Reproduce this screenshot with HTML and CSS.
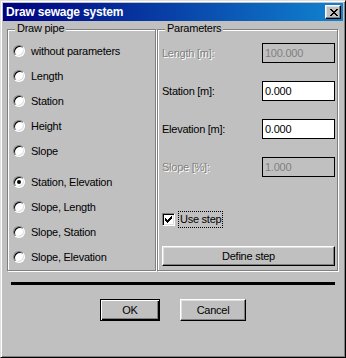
FILE: index.html
```html
<!DOCTYPE html>
<html lang="en">

<head>
    <meta charset="UTF-8" />
    <title>Draw sewage system</title>
    <link rel="stylesheet" href="styles.css">
</head>

<body>
    <div class="window">
        <div class="titlebar">
            <span class="title">Draw sewage system</span>
            <button class="close" aria-label="Close">
                <svg width="8" height="7" viewBox="0 0 8 7" shape-rendering="crispEdges">
                    <path fill="#000" d="M0 0h2v1H0z M6 0h2v1H6z M1 1h2v1H1z M5 1h2v1H5z M2 2h4v1H2z M3 3h2v1H3z M2 4h4v1H2z M1 5h2v1H1z M5 5h2v1H5z M0 6h2v1H0z M6 6h2v1H6z" />
                </svg>
            </button>
        </div>

        <div class="body">
            <div class="groups">
                <div class="group pipe">
                    <span class="group-title">Draw pipe</span>
                    <div class="radio-row"><span class="radio"></span>without parameters</div>
                    <div class="radio-row"><span class="radio"></span>Length</div>
                    <div class="radio-row"><span class="radio"></span>Station</div>
                    <div class="radio-row"><span class="radio"></span>Height</div>
                    <div class="radio-row"><span class="radio"></span>Slope</div>
                    <div class="radio-row spaced"><span class="radio checked"></span>Station, Elevation</div>
                    <div class="radio-row"><span class="radio"></span>Slope, Length</div>
                    <div class="radio-row"><span class="radio"></span>Slope, Station</div>
                    <div class="radio-row"><span class="radio"></span>Slope, Elevation</div>
                </div>

                <div class="group params">
                    <span class="group-title">Parameters</span>
                    <div class="fields">
                        <span class="field-label disabled">Length [m]:</span>
                        <input class="edit" value="100.000" disabled>
                        <span class="field-label">Station [m]:</span>
                        <input class="edit" value="0.000">
                        <span class="field-label">Elevation [m]:</span>
                        <input class="edit" value="0.000">
                        <span class="field-label disabled">Slope [%]:</span>
                        <input class="edit" value="1.000" disabled>
                    </div>
                    <div class="check-row">
                        <span class="check">
                            <svg width="7" height="7" viewBox="0 0 7 7" shape-rendering="crispEdges">
                                <path fill="#000" d="M6 0h1v1H6z M5 1h2v1H5z M0 2h1v1H0z M4 2h3v1H4z M0 3h2v1H0z M3 3h3v1H3z M0 4h5v1H0z M1 5h3v1H1z M2 6h1v1H2z" />
                            </svg>
                        </span>
                        <span class="focus">Use step</span>
                    </div>
                    <button class="btn wide">Define step</button>
                </div>
            </div>

            <div class="separator"></div>

            <div class="actions">
                <button class="btn default">OK</button>
                <button class="btn cancel">Cancel</button>
            </div>
        </div>
    </div>
</body>

</html>
```

FILE: styles.css
```css
* {
    margin: 0;
    padding: 0;
    box-sizing: border-box;
}

body {
    font-family: 'Liberation Sans', Arial, sans-serif;
    font-size: 11px;
    letter-spacing: -0.25px;
    color: #000;
    background: #c0c0c0;
}

.window {
    width: 346px;
    height: 358px;
    background: #c0c0c0;
    border: 1px solid;
    border-color: #dfdfdf #000 #000 #dfdfdf;
    box-shadow: inset 1px 1px #fff, inset -1px -1px #808080;
    padding: 2px;
}

.titlebar {
    height: 18px;
    display: flex;
    align-items: center;
    justify-content: space-between;
    padding: 0 2px 0 3px;
    background: linear-gradient(to right, #000080, #1084d0);
}

.title {
    color: #fff;
    font-weight: bold;
    font-size: 12px;
    letter-spacing: -0.2px;
}

.close {
    width: 16px;
    height: 14px;
    display: flex;
    align-items: center;
    justify-content: center;
    padding-left: 1px;
    background: #c0c0c0;
    border: 1px solid;
    border-color: #fff #000 #000 #fff;
    box-shadow: inset -1px -1px #808080, inset 1px 1px #dfdfdf;
}

.body {
    padding: 8px 4px 0 4px;
}

.groups {
    display: flex;
    gap: 1px;
}

.group {
    position: relative;
    height: 242px;
    border: 1px solid #808080;
    box-shadow: 1px 1px 0 #fff, inset 1px 1px 0 #fff;
}

.group-title {
    position: absolute;
    top: -8px;
    left: 7px;
    padding: 0 2px;
    line-height: 13px;
    background: #c0c0c0;
}

.pipe {
    width: 149px;
    padding: 8px 0 0 5px;
}

.radio-row {
    height: 25px;
    display: flex;
    align-items: center;
    gap: 6px;
}

.radio-row.spaced {
    margin-top: 6px;
}

.radio {
    width: 12px;
    height: 12px;
    border-radius: 50%;
    border: 1px solid;
    border-color: #808080 #fff #fff #808080;
    box-shadow: inset 1px 1px #000, inset -1px -1px #dfdfdf;
    background: #fff;
    display: flex;
    align-items: center;
    justify-content: center;
}

.radio.checked::after {
    content: "";
    width: 4px;
    height: 4px;
    border-radius: 50%;
    background: #000;
}

.params {
    width: 181px;
    padding: 13px 2px 0 4px;
    display: flex;
    flex-direction: column;
}

.fields {
    display: grid;
    grid-template-columns: 1fr 73px;
    grid-auto-rows: 20px;
    row-gap: 18px;
    align-items: center;
}

.field-label.disabled {
    color: #808080;
    text-shadow: 1px 1px 0 #fff;
}

.edit {
    width: 73px;
    height: 20px;
    border: 1px solid #000;
    padding: 0 2px;
    font: inherit;
    letter-spacing: inherit;
    color: #000;
    background: #fff;
    outline: none;
}

.edit:disabled {
    background: #c0c0c0;
    color: #808080;
}

.check-row {
    display: flex;
    align-items: center;
    gap: 4px;
    height: 16px;
    margin-top: 34px;
}

.check {
    width: 13px;
    height: 13px;
    display: flex;
    padding: 2px;
    border: 1px solid;
    border-color: #808080 #fff #fff #808080;
    box-shadow: inset 1px 1px #000, inset -1px -1px #dfdfdf;
    background: #fff;
}

.focus {
    outline: 1px dotted #000;
    padding: 1px;
    line-height: 13px;
}

.btn {
    font: inherit;
    letter-spacing: inherit;
    color: #000;
    background: #c0c0c0;
    border: 1px solid;
    border-color: #fff #000 #000 #fff;
    box-shadow: inset -1px -1px #808080, inset 1px 1px #dfdfdf;
}

.wide {
    width: 173px;
    height: 20px;
    margin-top: 19px;
}

.separator {
    height: 3px;
    margin: 11px 4px 0 4px;
    background: #000;
}

.actions {
    display: flex;
    justify-content: center;
    gap: 20px;
    margin-top: 14px;
}

.actions .btn {
    height: 22px;
}

.default {
    width: 60px;
    border-color: #000;
    box-shadow: inset 1px 1px #fff, inset -1px -1px #000, inset -2px -2px #808080;
}

.cancel {
    width: 66px;
}
```
